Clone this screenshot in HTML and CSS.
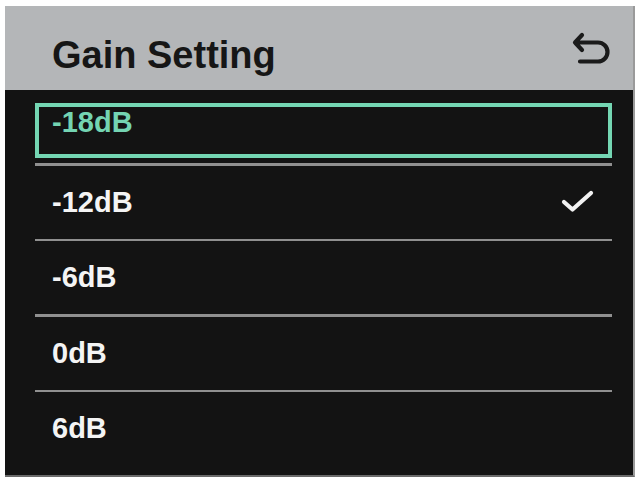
FILE: index.html
```html
<!DOCTYPE html>
<html>
<head>
<meta charset="utf-8">
<link rel="stylesheet" href="styles.css">
</head>
<body>
<div class="screen">
  <div class="header">
    <div class="title">Gain Setting</div>
    <svg class="back" width="40" height="34" viewBox="0 0 40 34">
      <path d="M10 5 L3 12.5 L10 20 M3 12.5 H26 A9.5 9.5 0 0 1 26 31.5 H8" fill="none" stroke="#1b1b1b" stroke-width="4.2" stroke-linecap="round" stroke-linejoin="round"/>
    </svg>
  </div>
  <div class="list">
    <div class="row selected"><span class="label">-18dB</span></div>
    <div class="sep"></div>
    <div class="row"><span class="label">-12dB</span>
      <svg class="check" width="34" height="24" viewBox="0 0 34 24">
        <path d="M3 12 L11.5 19.5 L30 3" fill="none" stroke="#f2f2f2" stroke-width="4.2" stroke-linecap="round" stroke-linejoin="round"/>
      </svg>
    </div>
    <div class="sep"></div>
    <div class="row"><span class="label">-6dB</span></div>
    <div class="sep"></div>
    <div class="row"><span class="label">0dB</span></div>
    <div class="sep"></div>
    <div class="row"><span class="label">6dB</span></div>
  </div>
</div>
</body>
</html>
```
FILE: styles.css
```css
html, body {
  margin: 0;
  padding: 0;
  background: #ffffff;
}
body {
  font-family: "Liberation Sans", Arial, sans-serif;
}
.screen {
  margin: 6px 0 0 5px;
  width: 630px;
  height: 471px;
  background: #131313;
  display: flex;
  flex-direction: column;
  box-sizing: border-box;
  border-right: 2px solid #9a9a9a;
  border-bottom: 2px solid #6a6a6a;
}
.header {
  height: 84px;
  flex: none;
  background: #b4b6b8;
  display: flex;
  justify-content: space-between;
  align-items: flex-start;
  padding: 0 21px 0 47px;
}
.title {
  font-size: 38px;
  line-height: 38px;
  font-weight: bold;
  color: #161616;
  padding-top: 30px;
}
.back {
  margin-top: 24px;
  display: block;
}
.list {
  display: flex;
  flex-direction: column;
  padding: 13px 21px 0 30px;
}
.row {
  height: 73px;
  display: flex;
  align-items: center;
  justify-content: space-between;
  padding: 0 17px 0 17px;
  box-sizing: border-box;
}
.label {
  font-size: 29px;
  line-height: 29px;
  font-weight: bold;
  color: #f4f4f4;
}
.row.selected {
  height: 55px;
  margin-bottom: 5px;
  border: 4px solid #74d6b3;
  align-items: flex-start;
  padding: 1px 13px 0 13px;
}
.row.selected .label {
  color: #74d4b2;
}
.sep {
  height: 2.5px;
  background: #909090;
  flex: none;
}
.check {
  display: block;
}
```
